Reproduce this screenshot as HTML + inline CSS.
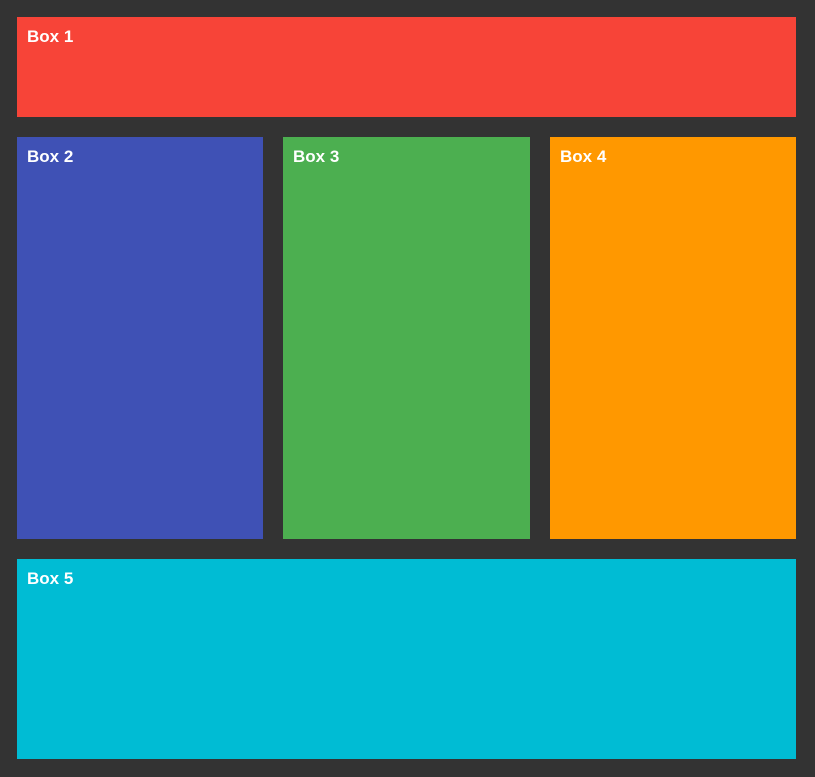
<!DOCTYPE html>
<html><head><style>
html,body{margin:0;padding:0;background:#333;width:815px;height:777px;overflow:hidden}
.b{position:absolute;color:#fff;font-family:"Liberation Sans",sans-serif;font-weight:bold;font-size:17px;padding:9px 10px;box-sizing:border-box;line-height:22px}
</style></head><body>
<div class="b" style="left:17px;top:17px;width:779px;height:100px;background:#f74438">Box 1</div>
<div class="b" style="left:17px;top:137px;width:246px;height:402px;background:#3f51b5">Box 2</div>
<div class="b" style="left:283px;top:137px;width:247px;height:402px;background:#4caf50">Box 3</div>
<div class="b" style="left:550px;top:137px;width:246px;height:402px;background:#ff9800">Box 4</div>
<div class="b" style="left:17px;top:559px;width:779px;height:200px;background:#00bcd4">Box 5</div>
</body></html>
